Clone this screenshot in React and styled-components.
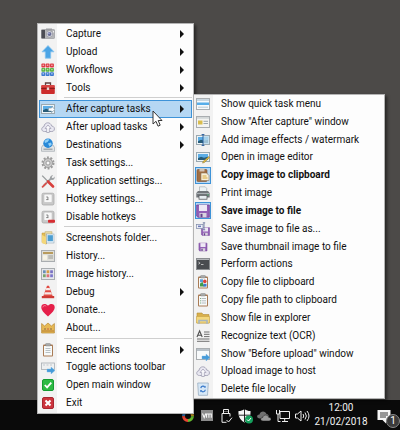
import React from "react";
import styled, { createGlobalStyle } from "styled-components";

const GlobalStyle = createGlobalStyle`
  * { box-sizing: border-box; }
  body {
    margin: 0;
    background: #4c4a48;
    font-family: Roboto, "Noto Sans", sans-serif;
    font-size: 10px;
    color: #111;
  }
  button { font: inherit; color: inherit; }
`;

const Desktop = styled.div`
  position: relative;
  display: flex;
  flex-direction: column;
  justify-content: flex-end;
  min-height: 100vh;
  overflow: hidden;
  background: #4c4a48;
`;

const Menu = styled.div`
  position: absolute;
  display: flex;
  flex-direction: column;
  border: 1px solid #b4b4b4;
  background: linear-gradient(to right, #f2f2f2 19px, #fdfdfd 19px);
  box-shadow: 2px 2px 3px rgba(0, 0, 0, 0.5);
`;

const MainMenu = styled(Menu)`
  left: 37px;
  bottom: 16px;
  width: 157px;
  max-height: calc(100vh - 39px);
  padding: 1px;
`;

const SubMenu = styled(Menu)`
  left: 193px;
  top: 94px;
  width: 192px;
  max-height: calc(100vh - 125px);
`;

const Item = styled.button`
  display: flex;
  align-items: center;
  flex: 0 1 18px;
  min-height: 0;
  height: 18px;
  padding: 0 7px 0 0;
  border: 1px solid ${(p) => (p.$active ? "#3e93d8" : "transparent")};
  background: ${(p) => (p.$active ? "#b5d7f3" : "transparent")};
  font-weight: ${(p) => (p.$bold ? 700 : 400)};
  line-height: 14px;
  text-align: left;
  white-space: nowrap;
`;

const IconCell = styled.span`
  display: flex;
  align-items: center;
  justify-content: center;
  flex: none;
  width: 16px;
  height: 17px;
  margin-right: 10px;
  border: 1px solid ${(p) => (p.$checked ? "#3e93d8" : "transparent")};
  background: ${(p) => (p.$checked ? "#b5d7f3" : "transparent")};
`;

const Label = styled.span`
  flex: 1;
`;

const Arrow = styled.span`
  border-left: 4px solid #111;
  border-top: 4px solid transparent;
  border-bottom: 4px solid transparent;
`;

const Separator = styled.hr`
  flex: none;
  width: calc(100% - 25px);
  height: 1px;
  margin: 1px 0 2px 25px;
  border: 0;
  background: #cfcfcf;
`;

const Taskbar = styled.footer`
  display: flex;
  align-items: center;
  justify-content: flex-end;
  height: 30px;
  padding-right: 4px;
  background: #0a0a0a;
  color: #f2f2f2;
`;

const Tray = styled.div`
  display: flex;
  gap: 3px;
  padding-top: 2px;
`;

const TrayButton = styled.button`
  display: flex;
  align-items: center;
  justify-content: center;
  width: 16px;
  height: 16px;
  padding: 0;
  border: 0;
  background: none;
`;

const Clock = styled.time`
  width: 62px;
  font-size: 10px;
  line-height: 14px;
  text-align: center;
`;

const Notifications = styled.button`
  position: relative;
  width: 24px;
  height: 30px;
  padding: 5px 0 0 5px;
  border: 0;
  background: none;
  text-align: left;
`;

const Badge = styled.span`
  position: absolute;
  right: -4px;
  bottom: 2px;
  width: 14px;
  height: 14px;
  border: 1px solid #8a8a8a;
  border-radius: 50%;
  background: #3b3b3b;
  color: #fff;
  font-size: 10px;
  line-height: 12px;
  text-align: center;
`;

const Pointer = styled.svg`
  position: absolute;
  left: 152px;
  top: 110px;
  pointer-events: none;
`;

const Svg = ({ children, size = 14, box = 14 }) => (
  <svg width={size} height={size} viewBox={`0 0 ${box} ${box}`} aria-hidden="true">
    {children}
  </svg>
);

const Pane = ({ fill = "#f4f4f2" }) => (
  <rect x=".5" y="1.5" width="13" height="11" fill={fill} stroke="#a9adb0" />
);

const Board = () => (
  <>
    <rect x="2" y="1.5" width="10" height="12" rx="1" fill="#a97b55" />
    <rect x="3" y="3" width="8" height="9.5" fill="#f7fafa" />
    <rect x="4.5" y=".5" width="5" height="2.5" rx=".8" fill="#a8aaa9" stroke="#777" strokeWidth=".4" />
  </>
);

const Floppy = () => (
  <>
    <path d="M.7 1h12.6v12.2H2L.7 12z" fill="#9360b6" stroke="#73439a" strokeWidth=".8" />
    <rect x="3" y="1" width="8" height="6" fill="#eee9f5" />
    <rect x="3.5" y="9" width="7" height="4.2" fill="#d9d4df" />
    <rect x="4.5" y="9.8" width="2" height="3.4" fill="#65418a" />
  </>
);

const CloudUp = () => (
  <>
    <path d="M3.5 11.5C-.2 11.5 0 7 3 6.6 3.4 1.8 9.6 1.5 10.6 6c3.6.1 3.9 5.5.2 5.5z" fill="#e9e8f1" stroke="#a9a8ba" />
    <path d="M7 5l3 3.5H8.3v4H5.7v-4H4z" fill="#fbfbfd" stroke="#a3a1b5" strokeWidth=".8" />
  </>
);

const Photo = () => (
  <>
    <rect x=".5" y="2.5" width="13" height="9" fill="#edf4f8" stroke="#9ba9b1" />
    <rect x="2" y="4" width="10" height="6" fill="#5daee6" />
    <path d="M2 8.3l3-1.5 3 1 4-1V10H2z" fill="#285c78" />
  </>
);

const BlueArrow = () => (
  <path d="M6 9h4V7l4 3.5L10 14v-2H6z" fill="#459bd9" stroke="#78b8e6" strokeWidth=".4" />
);

const KeyCap = () => (
  <>
    <rect x="1" y="1.2" width="12" height="11.8" rx="1.5" fill="#c9c9c9" stroke="#a4a4a4" strokeWidth=".7" />
    <rect x="3" y="2.2" width="8" height="8.3" rx="1" fill="#f7f7f7" stroke="#b9b9b9" strokeWidth=".5" />
    <path d="M5.3 5h1.6v2.5M5.2 7.6h2.2" fill="none" stroke="#777" strokeWidth=".9" />
  </>
);

const dots = [1, 5.3, 9.6];
const rowColors = ["#dd3c45", "#55b13f", "#3c79d0"];

const icons = {
  camera: (
    <>
      <rect x=".3" y="2.5" width="13.4" height="9" rx="1" fill="#b4b5b8" stroke="#85868b" strokeWidth=".5" />
      <rect x=".5" y="3" width="3.5" height="8.3" fill="#4c4d55" />
      <rect x="5" y="1.5" width="6" height="2" fill="#9c9da1" />
      <circle cx="8.5" cy="7" r="3.2" fill="#dfe0e6" stroke="#888a95" strokeWidth=".6" />
      <circle cx="8.5" cy="7" r="2" fill="#6a6e98" />
      <circle cx="8" cy="6.3" r=".8" fill="#b4bdeb" />
      <rect x="12" y="4" width="1" height="1.5" fill="#eee" />
    </>
  ),
  upload: <path d="M7 .6l6 6.2H9.7v6.4H4.3V6.8H1z" fill="#4ba4e5" stroke="#86c4ef" strokeWidth=".8" />,
  grid: dots.map((y, r) =>
    dots.map((x) => (
      <g key={`${x}-${y}`}>
        <rect x={x - 0.6} y={y - 0.4} width="3.9" height="3.9" rx=".8" fill={rowColors[r]} />
        <rect x={x + 0.5} y={y + 0.5} width="1.6" height="1.4" rx=".5" fill="#fff" opacity=".55" />
      </g>
    ))
  ),
  toolbox: (
    <>
      <path d="M4.5 4V2h5v2" fill="none" stroke="#61403f" strokeWidth="1.3" />
      <rect x=".2" y="4" width="13.6" height="9" rx="1" fill="#cc2c2c" />
      <path d="M.2 7.5h13.6" stroke="#7f1717" strokeWidth=".8" />
      <path d="M1 5h12" stroke="#ea7771" strokeWidth=".7" />
      <rect x="5.8" y="6.4" width="2.4" height="2.6" fill="#e6d5d1" />
    </>
  ),
  afterCapture: (
    <>
      <Photo />
      <path d="M7.5 6h3V4l3.3 3.4-3.3 3.3V9h-3z" fill="#fff" stroke="#7f99a9" strokeWidth=".7" />
    </>
  ),
  cloud: <CloudUp />,
  globe: (
    <>
      <path d="M2 7L.5 9.5v3.8h13V9.5L12 7z" fill="#e1e4e6" stroke="#a4abb0" strokeWidth=".7" />
      <rect x="2.5" y="10.5" width="9" height="1.5" fill="#a3aaaf" />
      <circle cx="7" cy="5.2" r="4.7" fill="#2889d8" />
      <path d="M3.5 3.4C5 1 7 1 8.4 1.6L6.6 4 4 5zM7 5.5l3-1 .8 2-2.3 2z" fill="#8fd0f7" />
    </>
  ),
  gear: (
    <>
      <circle cx="7" cy="7" r="5.5" fill="none" stroke="#9a9a9a" strokeWidth="2" strokeDasharray="1.9 1.56" />
      <circle cx="7" cy="7" r="4.5" fill="#c9c9c9" stroke="#929292" strokeWidth=".8" />
      <circle cx="7" cy="7" r="2" fill="#f8f8f8" stroke="#8e8e8e" strokeWidth=".8" />
    </>
  ),
  wrench: (
    <>
      <path d="M2.6 11.8l7-7" stroke="#9b9fa2" strokeWidth="1.8" />
      <path d="M9 5.3c-.7-2 1-4.4 3.2-4L10.6 3l.6 1 1.1.3 1.1-1.7c1 3-2.2 4.2-4.4 2.7z" fill="#9b9fa2" />
      <path d="M1.2 1.6l5.4 5.5" stroke="#95999b" strokeWidth="1.3" />
      <path d="M7 7.5l5 5" stroke="#d8403d" strokeWidth="2.6" strokeLinecap="round" />
      <path d="M1.6 12.8L5 9.4" stroke="#d8504b" strokeWidth="1.8" strokeLinecap="round" />
    </>
  ),
  key: <KeyCap />,
  keyOff: (
    <>
      <KeyCap />
      <rect x="7" y="9.8" width="7" height="3" rx=".8" fill="#d72d32" />
    </>
  ),
  shots: (
    <>
      <path d="M1 2h4.5v11L1 11.5z" fill="#e3bd55" stroke="#bd963a" strokeWidth=".5" />
      <rect x="4" y=".8" width="7" height="9.5" fill="#e8d9a3" stroke="#b6a05d" strokeWidth=".5" />
      <rect x="5.5" y="3" width="7.5" height="9" fill="#eaf4fa" stroke="#879cac" strokeWidth=".5" />
      <rect x="6.6" y="4.2" width="5.3" height="6" fill="#4d9ed1" />
      <path d="M1 4l4 2v7.5L1 12z" fill="#f4d77a" />
    </>
  ),
  history: (
    <>
      <Pane fill="#deded9" />
      <rect x="2" y="3" width="10" height="2" fill="#b89b5c" />
      <rect x="2" y="6.2" width="4" height="4.6" fill="#f7f4e6" />
      <path d="M7.3 7H12M7.3 9H12" stroke="#9c9c94" />
    </>
  ),
  imageHistory: (
    <>
      <Pane fill="#e5e7eb" />
      {["#6a8db8", "#d59b45", "#7970c2", "#78a46b", "#e06f75", "#7d76cb"].map((c, i) => (
        <rect key={i} x={2 + (i % 3) * 3.6} y={3.3 + Math.floor(i / 3) * 4} width="2.7" height="2.9" fill={c} />
      ))}
    </>
  ),
  cone: (
    <>
      <path d="M6 .7h2L12 12H2z" fill="#e14b43" />
      <path d="M5.3 3h3.4l.7 2.2H4.6zM3.8 7.3h6.4l.8 2.2H3z" fill="#f6e9e6" />
      <path d="M.8 11h12.4v2.2H.8z" fill="#cf3b35" />
    </>
  ),
  heart: (
    <>
      <path d="M7 13.5C2.5 9.4.3 7 .3 4.2.3.3 5 0 7 2.8 9 0 13.7.3 13.7 4.2 13.7 7 11.5 9.4 7 13.5z" fill="#e51f49" />
      <path d="M1.8 4.4C2 2.6 4 2 5.2 3.2" fill="none" stroke="#f68298" />
    </>
  ),
  crown: (
    <>
      <path d="M.6 2.5L3.6 5 7 2l3.4 3 3-2.500V12H.6z" fill="#e7b955" stroke="#b78a35" strokeWidth=".7" />
      <path d="M1 10h12" stroke="#b57e35" />
      <circle cx="4" cy="8" r=".8" fill="#7e6148" />
      <circle cx="7" cy="8" r=".8" fill="#c85842" />
      <circle cx="10" cy="8" r=".8" fill="#7e6148" />
    </>
  ),
  clipboard: (
    <>
      <Board />
      <path d="M4.5 5.5h5M4.5 7.5h5M4.5 9.5h5" stroke="#a8b2b8" strokeWidth=".8" />
    </>
  ),
  toolbar: (
    <>
      <rect x=".5" y="3" width="13" height="6.5" fill="#eef0f1" stroke="#a7adb3" strokeWidth=".8" />
      <path d="M2 5h2M5.5 5h2M9 5h2" stroke="#c1c6cb" />
      <BlueArrow />
    </>
  ),
  check: (
    <>
      <rect x="1.500" y="1.5" width="11" height="11" rx="1.5" fill="#2cba43" stroke="#159b31" />
      <path d="M3.8 7l2.3 2.4 4.2-4.8" fill="none" stroke="#fff" strokeWidth="1.8" />
    </>
  ),
  exit: (
    <>
      <rect x="1.5" y="1.5" width="11" height="11" rx="1.5" fill="#cc343d" stroke="#a92631" />
      <path d="M4.5 4.5l5 5M9.5 4.5l-5 5" stroke="#fff" strokeWidth="2.1" />
    </>
  ),
  quickMenu: (
    <>
      <Pane fill="#f7fafc" />
      <rect x="1" y="2" width="12" height="2" fill="#c9d7e0" />
      <rect x="1" y="5.5" width="12" height="2.5" fill="#58aee9" />
      <path d="M2 10.2h10" stroke="#bac8d0" />
    </>
  ),
  captureWindow: (
    <>
      <Pane />
      <rect x="1" y="2" width="12" height="1.8" fill="#d3d7d8" />
      <rect x="2" y="5.5" width="4.5" height="4" fill="#d9bd4e" />
      <path d="M7.5 6.3H12M7.5 8.5H12" stroke="#9da7ab" />
    </>
  ),
  effects: (
    <>
      <Photo />
      <rect x="7" y="3" width="6" height="8" fill="#b9d9eb" opacity=".8" />
      <path d="M7 1.5v11M5.6 1.5h2.8M5.6 12.5h2.8" stroke="#255a9b" strokeWidth=".9" />
    </>
  ),
  editor: (
    <>
      <Photo />
      <path d="M12.7 6.5l1 1-5.2 5-2 .6.7-1.8z" fill="#dfb93d" stroke="#8d7940" strokeWidth=".5" />
    </>
  ),
  paste: (
    <>
      <rect x="1" y="1.5" width="10" height="12" rx="1" fill="#a16e42" stroke="#7c4f2d" strokeWidth=".6" />
      <rect x="3.5" y=".5" width="5" height="3" fill="#d1c4b8" />
      <path d="M5 5h5.5L13 7.5v5H5z" fill="#f7efd9" stroke="#8c765b" strokeWidth=".6" />
      <path d="M6.5 8h4M6.5 10h5" stroke="#d5a93d" />
    </>
  ),
  printer: (
    <>
      <path d="M3.5 6V.8h5.7l1.5 1.5V6z" fill="#edf3f4" stroke="#98a3a7" strokeWidth=".6" />
      <path d="M2 5h10l1.7 2v4.5H.3V7z" fill="#72777b" />
      <path d="M.6 7.5h12.8" stroke="#aab0b4" />
      <rect x="3" y="9.3" width="8" height="3.9" fill="#e7edf0" stroke="#4a4e52" strokeWidth=".7" />
      <rect x="11.2" y="8.4" width="1.3" height="1" fill="#51c878" />
    </>
  ),
  save: <Floppy />,
  saveAs: (
    <>
      <g transform="translate(5 5) scale(.64)"><Floppy /></g>
      <rect x=".5" y="2.4" width="6.5" height="4" fill="#edf0f8" stroke="#7d89a8" strokeWidth=".7" />
      <path d="M8 .8v7M6.8.8h2.4M6.8 7.8h2.4" stroke="#5e6a96" strokeWidth=".8" />
      <rect x="2" y="3.6" width="3" height="1.5" fill="#6b79b7" />
    </>
  ),
  saveSmall: <g transform="translate(2.5 2.5) scale(.64)"><Floppy /></g>,
  terminal: (
    <>
      <rect x=".5" y="1.5" width="13" height="11" fill="#494c50" stroke="#8a8d90" />
      <path d="M1 2.5h12" stroke="#b3b6b9" />
      <path d="M2.4 5l1.7 1.1-1.7 1.1M5 7.5h2.5" fill="none" stroke="#e8e8e8" strokeWidth=".7" />
    </>
  ),
  copyFile: (
    <>
      <Board />
      <rect x="4" y="4.3" width="3" height="3" fill="#5a9ed8" />
      <circle cx="8.8" cy="6.4" r="1.8" fill="#dd4139" />
      <path d="M4 11.5V8.6L6.5 7l2 4.5z" fill="#439c49" />
      <rect x="7.5" y="8.8" width="3" height="2.8" fill="#3d77cf" />
    </>
  ),
  copyPath: (
    <>
      <Board />
      <path d="M5.5 5.5h4.5M5.5 7.8h4.5M5.5 10h4.5" stroke="#a3abb0" strokeWidth=".8" />
      <path d="M4 5.5h.8M4 7.8h.8M4 10h.8" stroke="#5a9a61" />
    </>
  ),
  folder: (
    <>
      <path d="M1 2h5l1 1.5h6V12H1z" fill="#d9b04b" stroke="#b18d37" strokeWidth=".6" />
      <path d="M.4 5.5h13.2V12H.4z" fill="#f3d77c" stroke="#c6a146" strokeWidth=".6" />
      <path d="M3 12.8V9.5h8v3.3" fill="none" stroke="#a7b5bd" strokeWidth="1.6" />
    </>
  ),
  ocr: (
    <>
      <path d="M1 8L3.6 2 6.2 8M2 6.2h3.2" fill="none" stroke="#505050" strokeWidth="1.1" />
      <path d="M8 3h5.5M8 5.3h5.5M8 7.6h5.5M1 10h12.5M1 12.3h12.5" stroke="#6f6f6f" />
    </>
  ),
  beforeUpload: (
    <>
      <Pane fill="#f8fafb" />
      <rect x="1" y="2" width="12" height="2" fill="#b9c1c8" />
      <BlueArrow />
    </>
  ),
  recycle: (
    <>
      <path d="M1.7 1h10.6l-.8 12.3h-9z" fill="#d7e8f7" stroke="#9bafc1" strokeWidth=".8" />
      <path d="M4.8 6.2C5.2 3.5 8 3.8 8.6 5M9.3 7.7C9 10.3 6 10.3 5.3 8.7" fill="none" stroke="#3878c9" strokeWidth="1.2" />
      <path d="M7.7 5.6l2 .2V3.8zM6.2 8.3l-2-.3v2.2z" fill="#3878c9" />
    </>
  ),
};

const mainGroups = [
  [
    ["camera", "Capture", true],
    ["upload", "Upload", true],
    ["grid", "Workflows", true],
    ["toolbox", "Tools", true],
  ],
  [
    ["afterCapture", "After capture tasks", true],
    ["cloud", "After upload tasks", true],
    ["globe", "Destinations", true],
    ["gear", "Task settings..."],
    ["wrench", "Application settings..."],
    ["key", "Hotkey settings..."],
    ["keyOff", "Disable hotkeys"],
  ],
  [
    ["shots", "Screenshots folder..."],
    ["history", "History..."],
    ["imageHistory", "Image history..."],
    ["cone", "Debug", true],
    ["heart", "Donate..."],
    ["crown", "About..."],
  ],
  [
    ["clipboard", "Recent links", true],
    ["toolbar", "Toggle actions toolbar"],
    ["check", "Open main window"],
    ["exit", "Exit"],
  ],
];

const captureTasks = [
  ["quickMenu", "Show quick task menu"],
  ["captureWindow", 'Show "After capture" window'],
  ["effects", "Add image effects / watermark"],
  ["editor", "Open in image editor"],
  ["paste", "Copy image to clipboard", true],
  ["printer", "Print image"],
  ["save", "Save image to file", true],
  ["saveAs", "Save image to file as..."],
  ["saveSmall", "Save thumbnail image to file"],
  ["terminal", "Perform actions"],
  ["copyFile", "Copy file to clipboard"],
  ["copyPath", "Copy file path to clipboard"],
  ["folder", "Show file in explorer"],
  ["ocr", "Recognize text (OCR)"],
  ["beforeUpload", 'Show "Before upload" window'],
  ["cloud", "Upload image to host"],
  ["recycle", "Delete file locally"],
];

const trayIcons = [
  ["Color picker", (
    <>
      <path d="M8 2a6 6 0 0 1 6 6h-3a3 3 0 0 0-3-3z" fill="#f0b52c" />
      <path d="M14 8a6 6 0 0 1-6 6v-3a3 3 0 0 0 3-3z" fill="#65b82e" />
      <path d="M8 14a6 6 0 0 1-6-6h3a3 3 0 0 0 3 3z" fill="#e94532" />
      <path d="M2 8a6 6 0 0 1 6-6v3a3 3 0 0 0-3 3z" fill="#378bd7" />
    </>
  )],
  ["Virtual machine", (
    <>
      <rect x="2" y="2" width="12" height="11" fill="#8c8c8c" />
      <path d="M3.5 5.5l1.7 4 1.6-4M7.5 9.8V6h4.8v3.8M9.9 6v3.8" fill="none" stroke="#f5f5f5" strokeWidth="1.1" />
    </>
  )],
  ["USB device", (
    <g fill="none" stroke="#ececec">
      <path d="M5.5 5V1.5h5V5M4 5.5h8v3M4 5.5v8.8h4.5" />
      <path d="M7 3v.8M9 3v.8" />
      <path d="M8.5 12l2 2L14 9.7" />
    </g>
  )],
  ["Security", (
    <>
      <path d="M7.5 1c2 1.5 3.5 2 6 2.1.3 5-1.3 9-6 11.4C2.8 12 1.1 8.1 1.5 3.1 4 3 5.5 2.5 7.5 1z" fill="#f5f5f5" />
      <path d="M7.5 1v13M2 7.2h11" stroke="#111" strokeWidth=".9" />
      <circle cx="12" cy="11.5" r="4" fill="#159f5c" />
      <path d="M10 11.5l1.5 1.5 2.5-3" fill="none" stroke="#fff" />
    </>
  )],
  ["Cloud storage", (
    <>
      <path d="M4 10.5C0 10.5.6 6.5 3.5 6.6 4.1 2.6 9.4 2.4 10.5 6c3 .5 3 4.5.5 4.5z" fill="#707070" />
      <path d="M7 13c-3.2-.2-2.8-3.4-.3-3.5C7.3 6.2 12 6.3 12.6 9.3c3.3 0 3.3 3.7.3 3.7z" fill="#999" stroke="#111" strokeWidth=".5" />
    </>
  )],
  ["Network", (
    <g fill="none" stroke="#eee">
      <path d="M5 3.5h9.5v7H5zM9.7 10.5v3M7 13.5h6" />
      <path d="M1.5 2v4h3V2M3 6v7.5h2.5" />
    </g>
  )],
  ["Volume", (
    <g fill="none" stroke="#eee">
      <path d="M1.5 6v4h2L7 13V3L3.5 6zM9 6q1.5 2 0 4M11 4.5q2.8 3.5 0 7M13 3q4 5 0 10" />
    </g>
  )],
];

export default function App() {
  return (
    <>
      <GlobalStyle />
      <Desktop>
        <Taskbar>
          <Tray>
            {trayIcons.map(([name, art]) => (
              <TrayButton key={name} type="button" aria-label={name}>
                <Svg size={16} box={16}>{art}</Svg>
              </TrayButton>
            ))}
          </Tray>
          <Clock dateTime="2018-02-21T12:00">
            12:00
            <br />
            21/02/2018
          </Clock>
          <Notifications type="button" aria-label="Notifications">
            <svg width="14" height="16" viewBox="0 0 14 16" aria-hidden="true">
              <path d="M.5 1h13v10H9v3.5L5.5 11h-5z" fill="#f5f5f5" />
              <path d="M3 4h8M3 6h8M3 8h6" stroke="#222" strokeWidth=".9" />
            </svg>
            <Badge>1</Badge>
          </Notifications>
        </Taskbar>

        <MainMenu role="menu">
          {mainGroups.map((group, g) => (
            <React.Fragment key={g}>
              {g > 0 && <Separator />}
              {group.map(([icon, label, arrow]) => (
                <Item key={label} type="button" role="menuitem" $active={icon === "afterCapture"}>
                  <IconCell><Svg>{icons[icon]}</Svg></IconCell>
                  <Label>{label}</Label>
                  {arrow && <Arrow />}
                </Item>
              ))}
            </React.Fragment>
          ))}
        </MainMenu>

        <SubMenu role="menu">
          {captureTasks.map(([icon, label, checked]) => (
            <Item
              key={label}
              type="button"
              role="menuitemcheckbox"
              aria-checked={Boolean(checked)}
              $bold={checked}
            >
              <IconCell $checked={checked}><Svg>{icons[icon]}</Svg></IconCell>
              <Label>{label}</Label>
            </Item>
          ))}
        </SubMenu>

        <Pointer width="11" height="18" viewBox="0 0 11 18" aria-hidden="true">
          <path d="M1 1v13l3-2.7 2 4.9 2.2-1-2-4.7H10z" fill="#fff" stroke="#222" strokeWidth=".9" />
        </Pointer>
      </Desktop>
    </>
  );
}
